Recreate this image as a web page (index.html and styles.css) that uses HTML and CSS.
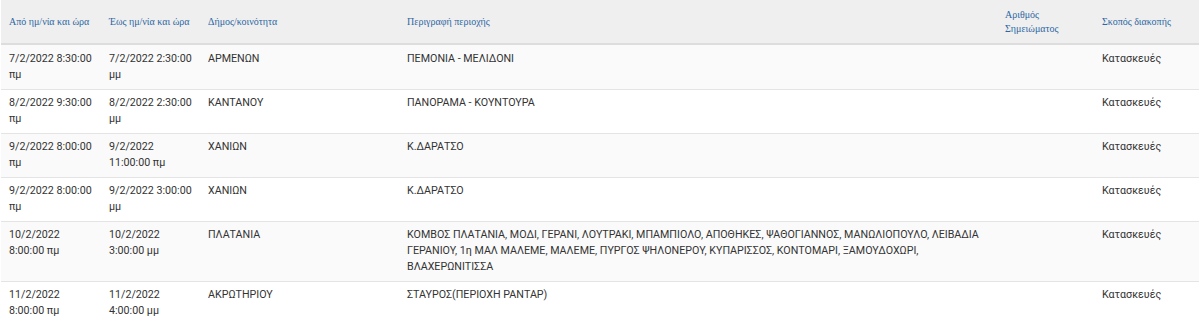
FILE: index.html
```html
<!DOCTYPE html>
<html lang="el">
<head>
<meta charset="utf-8">
<title>Διακοπές ρεύματος</title>
<link rel="stylesheet" href="styles.css">
</head>
<body>
<table class="outages">
  <colgroup>
    <col class="c-from">
    <col class="c-to">
    <col class="c-mun">
    <col class="c-area">
    <col class="c-note">
    <col class="c-reason">
  </colgroup>
  <thead>
    <tr>
      <th>Από ημ/νία και ώρα</th>
      <th>Έως ημ/νία και ώρα</th>
      <th>Δήμος/κοινότητα</th>
      <th>Περιγραφή περιοχής</th>
      <th>Αριθμός Σημειώματος</th>
      <th>Σκοπός διακοπής</th>
    </tr>
  </thead>
  <tbody>
    <tr>
      <td>7/2/2022 8:30:00 πμ</td>
      <td>7/2/2022 2:30:00 μμ</td>
      <td>ΑΡΜΕΝΩΝ</td>
      <td>ΠΕΜΟΝΙΑ - ΜΕΛΙΔΟΝΙ</td>
      <td></td>
      <td>Κατασκευές</td>
    </tr>
    <tr>
      <td>8/2/2022 9:30:00 πμ</td>
      <td>8/2/2022 2:30:00 μμ</td>
      <td>ΚΑΝΤΑΝΟΥ</td>
      <td>ΠΑΝΟΡΑΜΑ - ΚΟΥΝΤΟΥΡΑ</td>
      <td></td>
      <td>Κατασκευές</td>
    </tr>
    <tr>
      <td>9/2/2022 8:00:00 πμ</td>
      <td>9/2/2022 11:00:00 πμ</td>
      <td>ΧΑΝΙΩΝ</td>
      <td>Κ.ΔΑΡΑΤΣΟ</td>
      <td></td>
      <td>Κατασκευές</td>
    </tr>
    <tr>
      <td>9/2/2022 8:00:00 πμ</td>
      <td>9/2/2022 3:00:00 μμ</td>
      <td>ΧΑΝΙΩΝ</td>
      <td>Κ.ΔΑΡΑΤΣΟ</td>
      <td></td>
      <td>Κατασκευές</td>
    </tr>
    <tr>
      <td>10/2/2022 8:00:00 πμ</td>
      <td>10/2/2022 3:00:00 μμ</td>
      <td>ΠΛΑΤΑΝΙΑ</td>
      <td>ΚΟΜΒΟΣ ΠΛΑΤΑΝΙΑ, ΜΟΔΙ, ΓΕΡΑΝΙ, ΛΟΥΤΡΑΚΙ, ΜΠΑΜΠΙΟΛΟ, ΑΠΟΘΗΚΕΣ, ΨΑΘΟΓΙΑΝΝΟΣ, ΜΑΝΩΛΙΟΠΟΥΛΟ, ΛΕΙΒΑΔΙΑ ΓΕΡΑΝΙΟΥ, 1η ΜΑΛ ΜΑΛΕΜΕ, ΜΑΛΕΜΕ, ΠΥΡΓΟΣ ΨΗΛΟΝΕΡΟΥ, ΚΥΠΑΡΙΣΣΟΣ, ΚΟΝΤΟΜΑΡΙ, ΞΑΜΟΥΔΟΧΩΡΙ, ΒΛΑΧΕΡΩΝΙΤΙΣΣΑ</td>
      <td></td>
      <td>Κατασκευές</td>
    </tr>
    <tr>
      <td>11/2/2022 8:00:00 πμ</td>
      <td>11/2/2022 4:00:00 μμ</td>
      <td>ΑΚΡΩΤΗΡΙΟΥ</td>
      <td>ΣΤΑΥΡΟΣ(ΠΕΡΙΟΧΗ ΡΑΝΤΑΡ)</td>
      <td></td>
      <td>Κατασκευές</td>
    </tr>
  </tbody>
</table>
</body>
</html>
```

FILE: styles.css
```css
html, body {
  margin: 0;
  padding: 0;
  background: #ffffff;
}

.outages {
  width: 1198px;
  margin-left: 1px;
  border-collapse: collapse;
  table-layout: fixed;
  font-family: Roboto, "Noto Sans", sans-serif;
  font-size: 10.7px;
  color: #333333;
}

.c-from { width: 100px; }
.c-to { width: 99px; }
.c-mun { width: 199px; }
.c-area { width: 598px; }
.c-note { width: 97px; }
.c-reason { width: 105px; }

.outages th {
  background: #efefef;
  border-bottom: 2px solid #dddddd;
  height: 44px;
  padding: 0 4px 0 8px;
  box-sizing: border-box;
  text-align: left;
  vertical-align: middle;
  font-family: "Liberation Serif", "DejaVu Serif", serif;
  font-weight: normal;
  font-size: 10px;
  line-height: 14px;
  color: #2d67a3;
}

.outages td {
  border-top: 1px solid #e4e4e4;
  padding: 5px 4px 6px 8px;
  vertical-align: top;
  line-height: 16px;
}

.outages tbody tr:nth-child(odd) td {
  background: #fafafa;
}

.outages tbody tr:first-child td {
  border-top: 0;
  padding-top: 6px;
}
```
